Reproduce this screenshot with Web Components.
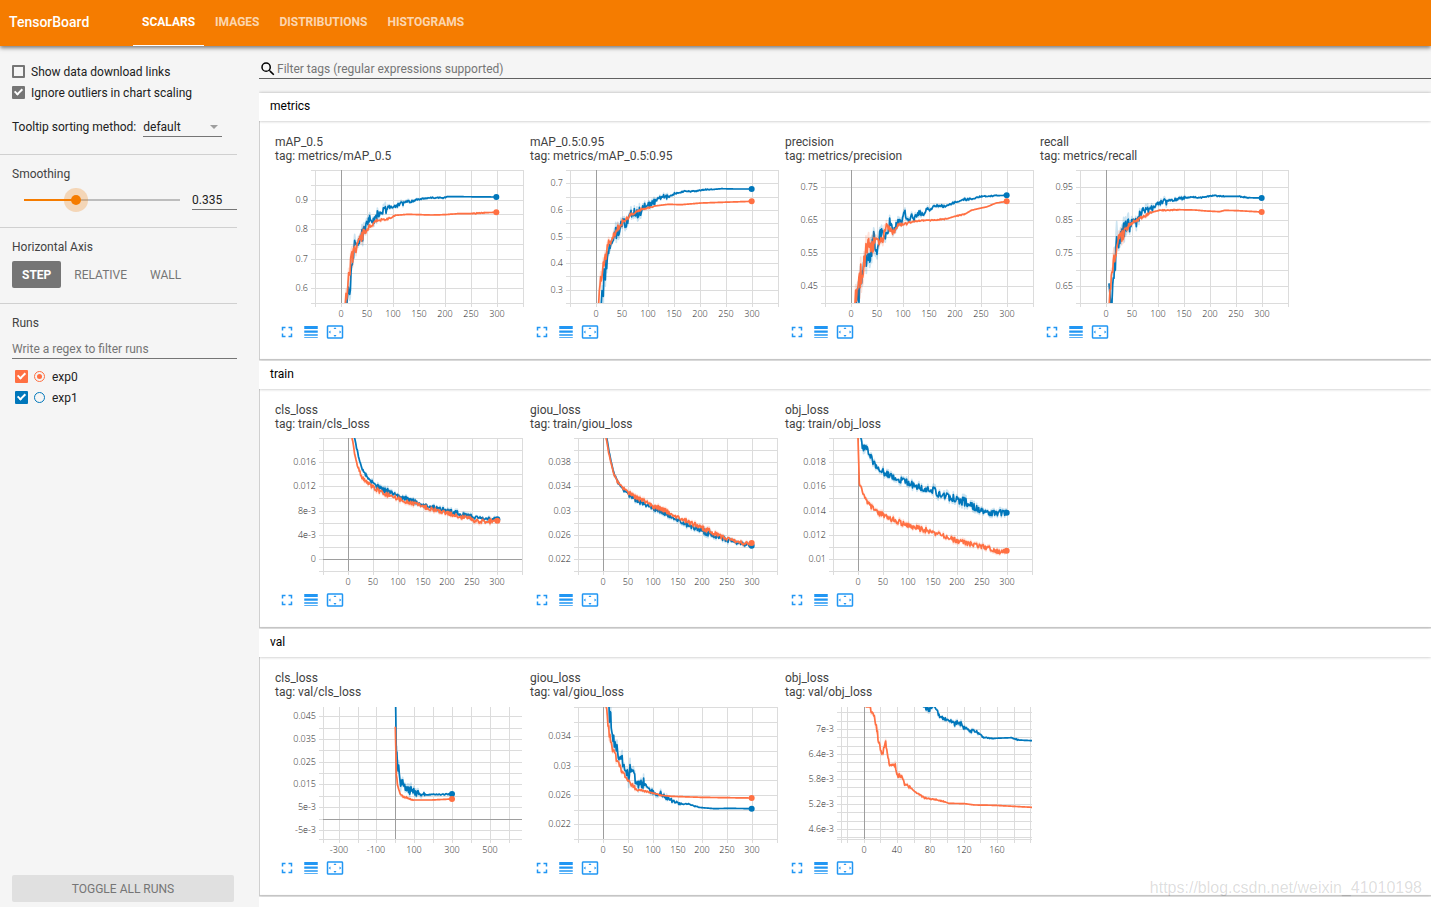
<!DOCTYPE html>
<html lang="en">
<head>
<meta charset="utf-8">
<title>TensorBoard</title>
<style>
    body {
        margin: 0;
        font-family: Roboto, "Liberation Sans", sans-serif;
        font-size: 12px;
        color: #212121;
        background: #f5f5f5;
    }
</style>
</head>
<body>
<tb-app></tb-app>

<script>
function define(name, html, setup) {
    const template = document.createElement('template');
    template.innerHTML = html;

    customElements.define(name, class extends HTMLElement {
        constructor() {
            super();
            this.attachShadow({ mode: 'open' }).appendChild(template.content.cloneNode(true));
        }

        connectedCallback() {
            if (setup) setup(this, this.shadowRoot);
        }
    });
}

// ---- header ----

define('tb-header', `
    <style>
        :host {
            display: flex;
            height: 46px;
            background: #f57c00;
            color: white;
            box-shadow: 0 2px 4px rgba(0, 0, 0, .5);
            position: relative;
            z-index: 1;
        }
        h1 {
            margin: 0;
            padding-left: 9px;
            box-sizing: border-box;
            flex: 0 0 133px;
            font-size: 14px;
            font-weight: 500;
            line-height: 44px;
        }
        nav { display: flex; gap: 2px; }
        a {
            padding: 0 9px;
            box-sizing: border-box;
            height: 46px;
            line-height: 44px;
            font-weight: 700;
            color: rgba(255, 255, 255, .7);
            text-decoration: none;
        }
        a.selected {
            color: white;
            border-bottom: 1px solid white;
        }
    </style>
    <h1>TensorBoard</h1>
    <nav>
        <a href="#scalars" class="selected">SCALARS</a>
        <a href="#images">IMAGES</a>
        <a href="#distributions">DISTRIBUTIONS</a>
        <a href="#histograms">HISTOGRAMS</a>
    </nav>
`);

// ---- checkbox with label ----

define('tb-checkbox', `
    <style>
        :host {
            display: flex;
            align-items: center;
            height: 21px;
            --color: #757575;
        }
        input {
            appearance: none;
            box-sizing: border-box;
            width: 13px;
            height: 13px;
            margin: 0;
            border: 2px solid var(--color);
            border-radius: 1px;
            display: grid;
        }
        input:checked { background: var(--color); }
        input:checked::after {
            content: "";
            width: 3px;
            height: 6px;
            border: solid white;
            border-width: 0 2px 2px 0;
            transform: translate(2px, -1px) rotate(45deg);
        }
        label { padding-left: 6px; }
    </style>
    <input type="checkbox" id="box">
    <label for="box"><slot></slot></label>
`, (host, root) => {
    root.querySelector('input').checked = host.hasAttribute('checked');
});

// ---- one run: checkbox, radio, name ----

define('tb-run', `
    <style>
        :host {
            display: flex;
            align-items: center;
            height: 21px;
            padding-left: 3px;
        }
        input {
            appearance: none;
            box-sizing: border-box;
            margin: 0;
            display: grid;
        }
        input[type=checkbox] {
            width: 13px;
            height: 13px;
            border-radius: 1px;
            background: var(--run-color);
        }
        input[type=checkbox]:checked::after {
            content: "";
            width: 3px;
            height: 6px;
            border: solid white;
            border-width: 0 2px 2px 0;
            transform: translate(4px, 1px) rotate(45deg);
        }
        input[type=radio] {
            width: 11px;
            height: 11px;
            margin: 0 7px 0 6px;
            border: 1px solid var(--run-color);
            border-radius: 50%;
            place-items: center;
        }
        input[type=radio]:checked::after {
            content: "";
            width: 5px;
            height: 5px;
            border-radius: 50%;
            background: var(--run-color);
        }
    </style>
    <input type="checkbox" id="run" checked>
    <input type="radio" aria-label="Only this run">
    <label for="run"><slot></slot></label>
`, (host, root) => {
    root.querySelector('[type=radio]').checked = host.hasAttribute('selected');
});

// ---- sidebar ----

define('tb-sidebar', `
    <style>
        :host {
            display: flex;
            flex-direction: column;
            box-sizing: border-box;
            padding-right: 22px;
        }
        section {
            padding: 11px 0 17px 12px;
            border-bottom: 1px solid #d0d0d0;
        }
        section:first-of-type { padding-top: 15px; }
        section:last-of-type { border: 0; }
        h3 {
            margin: 0 0 8px;
            font-size: 12px;
            font-weight: 400;
            line-height: 16px;
            color: #424242;
        }
        input, select, button {
            font: inherit;
            color: inherit;
            background: none;
            border: 0;
            border-radius: 0;
            padding: 0;
            outline: 0;
        }
        .row {
            display: flex;
            align-items: center;
            height: 20px;
        }
        .tooltip { margin-top: 14px; }
        .select {
            display: flex;
            align-items: center;
            width: 79px;
            height: 19px;
            margin-left: 7px;
            border-bottom: 1px solid #757575;
        }
        .select select {
            appearance: none;
            flex: 1;
            min-width: 0;
        }
        .select::after {
            content: "";
            margin-right: 4px;
            border: 4px solid transparent;
            border-top-color: #9e9e9e;
            border-bottom: 0;
        }
        input[type=range] {
            appearance: none;
            width: 166px;
            height: 20px;
            margin: 0 7px;
        }
        input[type=range]::-webkit-slider-runnable-track {
            height: 2px;
            background: linear-gradient(90deg, transparent 5px, #f57c00 5px 57px, #bdbdbd 57px 161px, transparent 161px);
        }
        input[type=range]::-webkit-slider-thumb {
            appearance: none;
            width: 10px;
            height: 10px;
            margin-top: -4px;
            border-radius: 50%;
            background: #f57c00;
            box-shadow: 0 0 0 7px rgba(245, 124, 0, .25);
        }
        .number {
            flex: 1;
            min-width: 0;
            height: 19px;
            border-bottom: 1px solid #757575;
        }
        .axis { padding-bottom: 15px; }
        .axis h3 { margin-bottom: 6px; }
        .axis div { display: flex; gap: 3px; }
        .axis button {
            height: 27px;
            padding: 0 10px;
            border-radius: 2px;
            color: #757575;
        }
        .axis button.selected {
            background: #757575;
            color: white;
            font-weight: 700;
        }
        .regex {
            display: block;
            box-sizing: border-box;
            width: 100%;
            height: 20px;
            margin-bottom: 7px;
            border-bottom: 1px solid #757575;
        }
        .regex::placeholder { color: #757575; }
        .toggle {
            height: 27px;
            margin: auto 3px 5px 12px;
            border-radius: 2px;
            background: #e0e0e0;
            color: #757575;
        }
    </style>
    <section>
        <tb-checkbox>Show data download links</tb-checkbox>
        <tb-checkbox checked>Ignore outliers in chart scaling</tb-checkbox>
        <div class="row tooltip">
            <label for="sorting">Tooltip sorting method:</label>
            <div class="select">
                <select id="sorting"><option>default</option></select>
            </div>
        </div>
    </section>
    <section>
        <h3 id="smoothing">Smoothing</h3>
        <div class="row">
            <input type="range" min="0" max="1" step="0.001" value="0.335" aria-labelledby="smoothing">
            <input class="number" value="0.335" aria-labelledby="smoothing">
        </div>
    </section>
    <section class="axis">
        <h3>Horizontal Axis</h3>
        <div>
            <button class="selected">STEP</button>
            <button>RELATIVE</button>
            <button>WALL</button>
        </div>
    </section>
    <section>
        <h3 id="runs">Runs</h3>
        <input class="regex" placeholder="Write a regex to filter runs" aria-labelledby="runs">
        <tb-run selected style="--run-color: #ff7043">exp0</tb-run>
        <tb-run style="--run-color: #0077bb">exp1</tb-run>
    </section>
    <button class="toggle">TOGGLE ALL RUNS</button>
`);

// ---- tag filter ----

define('tb-tag-filter', `
    <style>
        :host {
            display: flex;
            align-items: center;
            box-sizing: border-box;
            height: 21px;
            padding-top: 2px;
            margin: 12px 0 14px;
            border-bottom: 1px solid #616161;
        }
        svg { width: 18px; height: 18px; }
        input {
            flex: 1;
            border: 0;
            padding: 0;
            outline: 0;
            background: none;
            font: inherit;
        }
        input::placeholder { color: #757575; }
    </style>
    <svg viewBox="0 0 24 24"><path d="M15.5 14h-.79l-.28-.27A6.47 6.47 0 0 0 16 9.5 6.5 6.5 0 1 0 9.5 16c1.61 0 3.09-.59 4.23-1.57l.27.28v.79l5 4.99L20.49 19l-4.99-5zm-6 0a4.5 4.5 0 1 1 0-9 4.5 4.5 0 0 1 0 9z"/></svg>
    <input placeholder="Filter tags (regular expressions supported)" aria-label="Filter tags">
`);

// ---- category: heading and a pane of cards ----

define('tb-category', `
    <style>
        :host { display: block; margin-bottom: 1px; }
        h2 {
            margin: 0;
            height: 28px;
            padding-left: 11px;
            font-size: 12px;
            font-weight: 400;
            line-height: 26px;
            color: black;
            background: white;
            box-shadow: 0 0 3px rgba(0, 0, 0, .3);
            position: relative;
        }
        .pane {
            display: flex;
            flex-wrap: wrap;
            padding: 14px 0 15px 15px;
            background: white;
            border: solid #d0d0d0;
            border-width: 0 0 1px 1px;
        }
    </style>
    <h2></h2>
    <div class="pane"><slot></slot></div>
`, (host, root) => {
    root.querySelector('h2').textContent = host.getAttribute('name');
});

// ---- scalar card ----

const COLORS = { exp0: '#ff7043', exp1: '#0077bb' };
const METRIC_X = { left: 40, right: 248, top: 7, bottom: 140, x: [-50, 350, 50], xLabels: [0, 50, 100, 150, 200, 250, 300] };
const LOSS_X = { ...METRIC_X, left: 48, right: 247 };
const VAL_X = { ...LOSS_X, top: 8 };

// x and y hold [min, max, step]. The curves are on a grid of three units to
// a pixel that starts at origin; a third number in a point is its jitter.
const CHARTS = {
    'metrics/mAP_0.5': {
        ...METRIC_X, y: [0.55, 1, 0.05], yLabels: { 0.9: '0.9', 0.8: '0.8', 0.7: '0.7', 0.6: '0.6' }, origin: [171, 150],
        exp1: '267,549 275,500,14 283,440,24 290,385,16 298,370,10 308,358,8 318,335,14 328,312,8 335,298,8 342,308,8 350,295,9 360,280,9 372,278,10 384,276,12 392,262,6 405,260,3 420,256,4 435,250,4 445,248,3 460,244,4 480,239,2 500,235,1 520,233,1 540,233,1 555,234,1 568,230,1 600,230 715,231',
        exp0: '262,549 270,490,12 278,430,12 286,400,12 296,380,12 306,358,8 316,342,8 325,330,5 335,322,6 350,305,4 370,298,3 395,295,2 412,286,1 450,283 520,285 560,284 600,281 640,281 680,278,1 715,277'
    },
    'metrics/mAP_0.5:0.95': {
        ...METRIC_X, y: [0.25, 0.75, 0.05], yLabels: { 0.7: '0.7', 0.6: '0.6', 0.5: '0.5', 0.4: '0.4', 0.3: '0.3' }, origin: [126, 150],
        exp1: '220,549 228,480,20 236,430,20 244,380,10 256,358,6 265,340,14 275,325,10 285,305,8 295,312,14 305,290,8 315,275,8 325,282,8 338,274,10 350,258,5 365,253,4 380,245,5 392,236,3 405,230,3 418,232,4 430,225,2 445,220,2 470,214,1 500,214,1 525,209,1 550,209,1 580,206 620,207 671,207',
        exp0: '212,549 220,470,12 230,425,12 240,375,8 255,350,9 270,325,9 285,303,5 300,292,5 320,276,3 340,268,2 360,264,1 380,258,1 420,253 460,254 520,249 580,247 671,244'
    },
    'metrics/precision': {
        ...METRIC_X, y: [0.4, 0.8, 0.05], yLabels: { 0.75: '0.75', 0.65: '0.65', 0.55: '0.55', 0.45: '0.45' }, origin: [126, 150],
        exp1: '220,549 230,500,22 240,460,22 250,410,18 262,405,14 272,350,16 282,385,14 292,340,10 305,340,12 315,355,12 320,305,10 332,325,9 345,310,7 355,305,6 366,280,7 376,310,6 386,290,5 395,298,4 408,275,6 420,285,5 430,268,5 440,275,5 450,262,4 470,255,3 485,260,2 500,253,1 520,246,2 540,238,1 565,238,2 590,230,1 640,227,1 671,226',
        exp0: '216,549 224,480,20 235,455,24 245,420,24 255,375,20 265,395,20 275,370,16 290,360,10 305,350,14 312,315,8 325,335,5 335,335,5 343,315,3 365,313,3 380,308,2 400,303,1 440,301,1 490,297,1 515,289 545,283,1 565,271 590,265 610,261 640,249 671,244'
    },
    'metrics/recall': {
        ...METRIC_X, y: [0.6, 1, 0.05], yLabels: { 0.95: '0.95', 0.85: '0.85', 0.75: '0.75', 0.65: '0.65' }, origin: [126, 150],
        exp1: '213,490 218,549 228,480,24 236,410,40 244,360,30 255,335,14 265,318,16 275,325,16 285,300,8 295,305,12 305,285,9 315,265,9 325,280,12 335,270,10 345,265,6 355,250,5 375,248,5 385,245,6 400,243,3 415,238,3 440,234,3 460,231,1 490,233,1 520,227,1 560,229,1 600,229 630,233,1 671,234',
        exp0: '214,549 222,470,16 232,410,18 242,360,10 255,345,9 270,315,7 285,307,3 305,295,3 325,285,3 340,277,2 360,272 420,269,1 470,270 505,273 545,275 560,271 600,272 671,276'
    },
    'train/cls_loss': {
        ...LOSS_X, y: [-0.002, 0.02, 0.002], yLabels: { 0.016: '0.016', 0.012: '0.012', 0.008: '8e-3', 0.004: '4e-3', 0: '0' }, origin: [195, 144],
        exp1: '289,144 296,175,3 305,215,3 317,245,3 332,268,4 350,285,4 375,300,5 395,308,6 420,318,4 450,328,4 480,337,4 520,350,4 560,361,4 600,370,4 640,380,4 680,386,3 718,388,3',
        exp0: '282,144 290,190,2 298,228,2 310,258,3 325,275,4 350,294,4 380,312,4 420,326,4 460,338,4 500,350,4 540,362,4 590,376,4 640,388,4 680,396,4 718,392,4'
    },
    'train/giou_loss': {
        ...LOSS_X, y: [0.02, 0.042, 0.002], yLabels: { 0.038: '0.038', 0.034: '0.034', 0.03: '0.03', 0.026: '0.026', 0.022: '0.022' }, origin: [150, 144],
        exp1: '236,144 245,195,2 255,240,2 270,278,3 290,305,3 320,328,4 350,345,4 390,360,4 420,374,4 450,388,4 480,405,5 510,418,4 540,430,5 580,444,4 620,456,4 650,463,3 671,467,3',
        exp0: '234,144 244,198,2 255,243,2 268,275,3 290,300,3 320,320,4 350,335,4 375,348,4 405,358,4 440,375,4 480,395,4 520,413,4 550,425,4 580,440,4 620,452,3 650,461,3 671,459,3'
    },
    'train/obj_loss': {
        ...LOSS_X, y: [0.009, 0.02, 0.001], yLabels: { 0.018: '0.018', 0.016: '0.016', 0.014: '0.014', 0.012: '0.012', 0.01: '0.01' }, origin: [915, 144],
        exp1: '998,144 1003,175,6 1010,165,8 1025,190,6 1037,220,6 1055,238,5 1085,258,6 1110,265,5 1140,278,6 1165,288,6 1190,300,6 1215,302,6 1250,320,7 1290,328,8 1320,340,8 1350,358,7 1380,368,5 1410,370,5 1436,368,6',
        exp0: '990,144 994,280 1005,310,3 1020,340,3 1045,365,4 1080,382,5 1120,400,5 1160,413,5 1200,422,5 1240,436,4 1290,453,5 1340,465,4 1380,474,4 1415,486,4 1436,482,3'
    },
    'val/cls_loss': {
        ...VAL_X, y: [-0.009, 0.0491, 0.005], x: [-383, 670, 100], xLabels: [-300, -100, 100, 300, 500],
        yLabels: { 0.045: '0.045', 0.035: '0.035', 0.025: '0.025', 0.015: '0.015', 0.005: '5e-3', '-0.005': '-5e-3' }, origin: [195, 156],
        exp1: '413,156 415,300,2 420,340,18 428,375,12 438,390,9 448,408,10 455,410,9 465,408,9 475,418,7 490,413,6 500,418,3 545,419,1 582,417,1',
        exp0: '412,215 415,360 420,400,3 430,420,3 445,428,2 465,435,1 520,435 582,432'
    },
    'val/giou_loss': {
        ...VAL_X, y: [0.02, 0.038, 0.002], yLabels: { 0.034: '0.034', 0.03: '0.03', 0.026: '0.026', 0.022: '0.022' }, origin: [150, 156],
        exp1: '241,156 248,205,20 255,230,30 263,280,14 275,305,12 288,335,14 300,355,10 312,350,16 322,375,10 335,385,10 345,385,12 352,382,9 362,405,5 380,412,4 400,418,5 420,432,4 440,440,3 460,447,2 480,446,1 510,457,1 560,461 600,460 671,461',
        exp0: '234,156 242,220,8 252,280,9 265,310,6 280,345,6 295,372,5 310,388,3 325,403,3 350,408,2 400,421,1 430,424 520,427 671,429'
    },
    'val/obj_loss': {
        ...VAL_X, left: 56, y: [0.00436, 0.00753, 0.0002], x: [-27, 202, 20], xLabels: [0, 40, 80, 120, 160],
        yLabels: { 0.007: '7e-3', 0.0064: '6.4e-3', 0.0058: '5.8e-3', 0.0052: '5.2e-3', 0.0046: '4.6e-3' }, origin: [939, 156], open: true,
        exp1: '1178,150 1190,158,3 1205,162,5 1215,150,5 1225,165,5 1235,183,4 1250,190,4 1265,195,4 1280,208,4 1293,200,4 1305,218,5 1330,228,3 1350,232,3 1365,247,1 1400,250,1 1450,248 1470,255,1 1512,257',
        exp0: '1008,150 1015,156 1025,156 1035,175,5 1045,205,7 1050,255,7 1063,298,4 1073,265,4 1080,310,3 1085,330,3 1100,332,3 1105,345,7 1110,370,4 1117,358,5 1130,388,3 1145,395,3 1160,410,1 1180,422,1 1195,430,2 1220,433,1 1250,440,1 1262,445 1310,446 1340,450 1400,451 1512,457'
    }
};

// small seeded generator, so that a curve looks the same on every load
function random(seed) {
    return () => {
        seed = (seed * 16807) % 2147483647;
        return seed / 2147483647 * 2 - 1;
    };
}

function curvePath(text, spread, seed) {
    const rnd = random(seed);
    const points = text.split(' ').map(p => p.split(',').map(Number));
    let d = `M${points[0][0]} ${points[0][1]}`;
    for (let i = 1; i < points.length; i++) {
        const [x0, y0] = points[i - 1];
        const [x1, y1, jitter = 0] = points[i];
        const n = Math.max(1, Math.round((x1 - x0) / 2));
        for (let k = 1; k <= n; k++) {
            const noise = i === points.length - 1 && k === n ? 0 : rnd() * jitter * spread;
            d += `L${(x0 + (x1 - x0) * k / n).toFixed(1)} ${(y0 + (y1 - y0) * k / n + noise).toFixed(1)}`;
        }
    }
    return d;
}

function ticks([min, max, step]) {
    const list = [];
    for (let i = Math.ceil(min / step - 0.01); i * step <= max + step * 0.01; i++) {
        list.push(Number((i * step).toFixed(6)));
    }
    return list;
}

function drawChart(c) {
    const sx = v => Math.round(c.left + (v - c.x[0]) / (c.x[1] - c.x[0]) * (c.right - c.left));
    const sy = v => Math.round(c.bottom - (v - c.y[0]) / (c.y[1] - c.y[0]) * (c.bottom - c.top));
    const w = c.right - c.left;
    const h = c.bottom - c.top;
    let out = `<path class="grid" d="M${c.left - 4} ${c.bottom + .5}H${c.right}M${c.left + .5} ${c.top}V${c.bottom + 4}`;

    for (const v of ticks(c.x)) out += `M${sx(v) + .5} ${c.top}V${c.bottom + 4}`;
    for (const v of ticks(c.y)) out += `M${c.left - 4} ${sy(v) + .5}H${c.right}`;
    out += `"/><path class="zero" d="M${sx(0) + .5} ${c.top}V${c.bottom}`;
    if (c.y[0] < 0) out += `M${c.left} ${sy(0) + .5}H${c.right}`;
    out += '"/>';

    for (const v of c.xLabels) out += `<text class="x" x="${sx(v)}" y="${c.bottom + 14}">${v}</text>`;
    for (const v in c.yLabels) out += `<text class="y" x="${c.left - 7}" y="${sy(Number(v)) + 3}">${c.yLabels[v]}</text>`;

    out += `<svg x="${c.left}" y="${c.top}" width="${w}" height="${h}" viewBox="${c.origin.join(' ')} ${w * 3} ${h * 3}">`;
    for (const run of ['exp1', 'exp0']) {
        const seed = c[run].length * 97 + 11;
        out += `<path class="curve raw" stroke="${COLORS[run]}" d="${curvePath(c[run], 3, seed)}"/>`;
        out += `<path class="curve" stroke="${COLORS[run]}" d="${curvePath(c[run], 1.7, seed)}"/>`;
        if (!c.open) {
            const [x, y] = c[run].split(' ').pop().split(',');
            out += `<circle cx="${x}" cy="${y}" r="9" fill="${COLORS[run]}"/>`;
        }
    }
    return out + '</svg>';
}

define('tb-scalar-card', `
    <style>
        :host { display: block; width: 255px; line-height: 14px; color: #424242; }
        .chart { display: block; width: 255px; height: 157px; }
        .grid { stroke: #dcdcdc; fill: none; shape-rendering: crispEdges; }
        .zero { stroke: #9e9e9e; fill: none; shape-rendering: crispEdges; }
        .curve { fill: none; stroke-width: 5; stroke-linejoin: round; }
        .raw { opacity: .2; }
        text { font: 300 9px "Open Sans", "Noto Sans", sans-serif; fill: #222; }
        .x { text-anchor: middle; }
        .y { text-anchor: end; }
        .actions { display: flex; }
        button {
            display: grid;
            place-items: center;
            width: 24px;
            height: 24px;
            padding: 0;
            border: 0;
            background: none;
        }
        button svg { width: 18px; height: 18px; fill: #2196f3; }
    </style>
    <div class="name"></div>
    <div class="tag"></div>
    <svg class="chart"></svg>
    <div class="actions">
        <button aria-label="Full screen"><svg viewBox="0 0 24 24"><path d="M7 14H5v5h5v-2H7v-3zm-2-4h2V7h3V5H5v5zm12 7h-3v2h5v-5h-2v3zM14 5v2h3v3h2V5h-5z"/></svg></button>
        <button aria-label="Toggle log scale"><svg viewBox="0 0 24 24"><path d="M3 17h18v-2H3v2zm0 3h18v-1H3v1zm0-7h18v-3H3v3zm0-9v4h18V4H3z"/></svg></button>
        <button aria-label="Fit domain"><svg viewBox="0 0 24 24"><path d="M12.01 5.5L10 8h4l-1.99-2.5zM18 10v4l2.5-1.99L18 10zM6 10l-2.5 2.01L6 14v-4zm8 6h-4l2.01 2.5L14 16zm7-13H3c-1.1 0-2 .9-2 2v14c0 1.1.9 2 2 2h18c1.1 0 2-.9 2-2V5c0-1.1-.9-2-2-2zm0 16.01H3V4.99h18v14.02z"/></svg></button>
    </div>
`, (host, root) => {
    const tag = host.getAttribute('tag');
    root.querySelector('.name').textContent = tag.split('/')[1];
    root.querySelector('.tag').textContent = 'tag: ' + tag;
    root.querySelector('.chart').innerHTML = drawChart(CHARTS[tag]);
});

// ---- page ----

define('tb-app', `
    <style>
        :host {
            display: flex;
            flex-direction: column;
            height: 100vh;
            overflow: hidden;
        }
        .content {
            flex: 1;
            min-height: 0;
            display: flex;
        }
        tb-sidebar {
            flex: 0 0 259px;
            min-width: 0;
        }
        main {
            flex: 1;
            min-width: 0;
            overflow: hidden;
        }
        .watermark {
            position: absolute;
            right: 9px;
            bottom: 9px;
            font: 16px/20px "Liberation Sans", sans-serif;
            color: rgba(0, 0, 0, .14);
        }
    </style>
    <tb-header></tb-header>
    <div class="content">
        <tb-sidebar></tb-sidebar>
        <main>
            <tb-tag-filter></tb-tag-filter>
            <tb-category name="metrics">
                <tb-scalar-card tag="metrics/mAP_0.5"></tb-scalar-card>
                <tb-scalar-card tag="metrics/mAP_0.5:0.95"></tb-scalar-card>
                <tb-scalar-card tag="metrics/precision"></tb-scalar-card>
                <tb-scalar-card tag="metrics/recall"></tb-scalar-card>
            </tb-category>
            <tb-category name="train">
                <tb-scalar-card tag="train/cls_loss"></tb-scalar-card>
                <tb-scalar-card tag="train/giou_loss"></tb-scalar-card>
                <tb-scalar-card tag="train/obj_loss"></tb-scalar-card>
            </tb-category>
            <tb-category name="val">
                <tb-scalar-card tag="val/cls_loss"></tb-scalar-card>
                <tb-scalar-card tag="val/giou_loss"></tb-scalar-card>
                <tb-scalar-card tag="val/obj_loss"></tb-scalar-card>
            </tb-category>
            <tb-category name=""></tb-category>
        </main>
    </div>
    <div class="watermark">https://blog.csdn.net/weixin_41010198</div>
`);
</script>
</body>
</html>
